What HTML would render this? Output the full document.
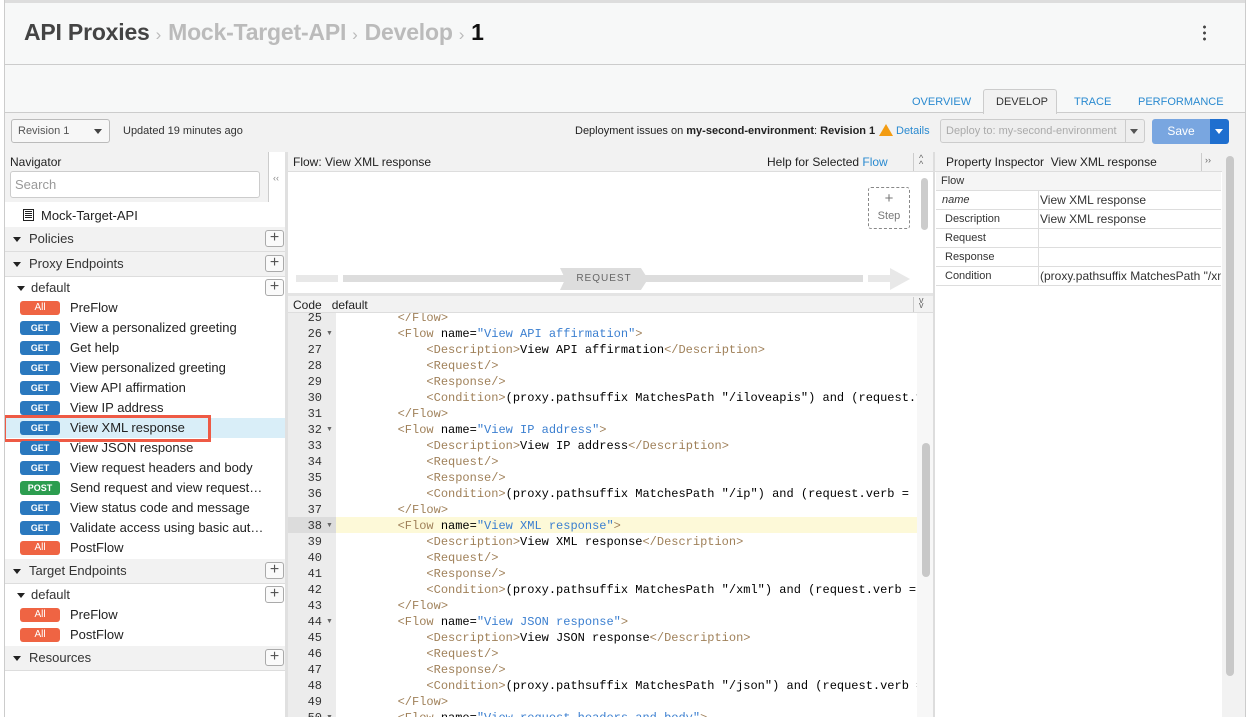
<!DOCTYPE html>
<html><head><meta charset="utf-8"><style>
*{box-sizing:border-box;margin:0;padding:0}
body{width:1251px;height:717px;overflow:hidden;background:#f2f2f2;font-family:"Liberation Sans",sans-serif;font-size:12px;color:#333;position:relative}
.a{position:absolute}
.hdr{left:5px;top:0;width:1240px;height:65px;background:#f7f8f8;border-top:3px solid #ddd;border-bottom:1px solid #ccc}
.tabs{left:5px;top:65px;width:1240px;height:48px;background:#f7f8f8;border-bottom:1px solid #ccc}
.tab{position:absolute;top:96px;font-size:11px;color:#2a8ad0}
.nav{left:5px;top:152px;width:280px;height:565px;background:#fff}
.sec{position:absolute;left:5px;width:280px;height:25px;background:#f2f2f2;border-bottom:1px solid #ddd;font-size:13px;line-height:24px;padding-left:24px}
.tri{position:absolute;left:8px;top:10px;width:0;height:0;border-left:4px solid transparent;border-right:4px solid transparent;border-top:5px solid #222}
.plus{position:absolute;left:265px;width:19px;height:17px;border:1px solid #aaa;border-radius:3px;background:#fafafa;color:#555;font-size:16px;line-height:14px;text-align:center}
.row{position:absolute;left:5px;width:280px;height:20px;font-size:13px;line-height:20px}
.b{position:absolute;left:15px;top:3px;width:40px;height:14px;border-radius:3px;color:#fff;font-size:9px;font-weight:bold;line-height:14px;text-align:center}
.get{background:#2a78be}.all{background:#ef6443;font-weight:normal;font-size:10px}.post{background:#2c9d4f}
.row .t{position:absolute;left:65px;top:0;color:#222;white-space:nowrap}
.code{font-family:"Liberation Mono",monospace;font-size:12px;white-space:pre}
.ln{position:absolute;left:288px;width:48px;height:16px;line-height:16px;text-align:right;padding-right:14px;font-family:"Liberation Mono",monospace;font-size:12px;color:#333}
.ar{position:absolute;left:326px;height:16px;line-height:16px;font-size:7px;color:#666}
.cl{position:absolute;left:340px;height:16px;line-height:16px;color:#000}
.g{color:#a0815a}.s{color:#3b7fd0}
.pr{position:absolute;left:936px;width:285px;height:19px;border-bottom:1px solid #ddd;font-size:12px;line-height:19px;background:#fff}
.pr .k{position:absolute;left:9px}.pr .v{position:absolute;left:102px;border-left:1px solid #ddd;padding-left:1px;height:19px;width:183px;white-space:nowrap;overflow:hidden}
.sep{color:#bbb;font-size:17px;font-weight:normal;margin:0 7px 0 6px}
</style></head><body>
<div class="a hdr"></div>
<div class="a" style="left:24px;top:19px;font-size:23px;color:#444;font-weight:bold;letter-spacing:-0.2px;white-space:nowrap">API Proxies<span class="sep">›</span><span style="color:#bbb">Mock-Target-API</span><span class="sep">›</span><span style="color:#bbb">Develop</span><span class="sep">›</span><span style="color:#111">1</span></div>
<div class="a" style="left:1203px;top:24px;width:3px;height:18px;background:radial-gradient(circle,#444 1.3px,transparent 1.6px) 0 0/3px 6px"></div>
<div class="a tabs"></div>
<div class="a" style="left:983px;top:89px;width:74px;height:25px;background:#f2f2f2;border:1px solid #ccc;border-bottom:none;border-radius:3px 3px 0 0"></div>
<div class="tab" style="left:912px">OVERVIEW</div>
<div class="tab" style="left:996px;color:#333">DEVELOP</div>
<div class="tab" style="left:1074px">TRACE</div>
<div class="tab" style="left:1138px">PERFORMANCE</div>
<div class="a" style="left:11px;top:119px;width:99px;height:24px;border:1px solid #bbb;border-radius:3px;background:#f7f7f7;font-size:11px;line-height:22px;padding-left:6px;color:#555">Revision 1<span style="position:absolute;right:7px;top:9px;border-left:4px solid transparent;border-right:4px solid transparent;border-top:5px solid #444"></span></div>
<div class="a" style="left:123px;top:125px;font-size:11px;color:#333">Updated 19 minutes ago</div>
<div class="a" style="left:575px;top:125px;font-size:11px;color:#222">Deployment issues on <b>my-second-environment</b>: <b>Revision 1</b></div>
<div class="a" style="left:879px;top:124px;width:0;height:0;border-left:7px solid transparent;border-right:7px solid transparent;border-bottom:12px solid #f39c12"></div>
<div class="a" style="left:896px;top:125px;font-size:11px;color:#2a8ad0">Details</div>
<div class="a" style="left:940px;top:119px;width:205px;height:24px;border:1px solid #ccc;border-radius:3px;background:#eee;font-size:11px;line-height:22px;padding-left:5px;color:#aaa">Deploy to: my-second-environment<span style="position:absolute;left:184px;top:0;width:1px;height:22px;background:#ccc"></span><span style="position:absolute;right:6px;top:9px;border-left:4px solid transparent;border-right:4px solid transparent;border-top:5px solid #555"></span></div>
<div class="a" style="left:1152px;top:119px;width:58px;height:25px;border-radius:3px 0 0 3px;background:#79a6e0;color:#fff;font-size:12px;line-height:25px;text-align:center">Save</div>
<div class="a" style="left:1210px;top:119px;width:19px;height:25px;border-radius:0 3px 3px 0;background:#1f6fcf"><span style="position:absolute;left:5px;top:10px;border-left:4px solid transparent;border-right:4px solid transparent;border-top:5px solid #fff"></span></div>

<!-- nav -->
<div class="a nav"></div>
<div class="a" style="left:5px;top:152px;width:263px;height:50px;background:#f2f2f2"></div>
<div class="a" style="left:268px;top:152px;width:1px;height:50px;background:#ccc"></div>
<div class="a" style="left:10px;top:155px;font-size:12px;color:#222">Navigator</div>
<div class="a" style="left:10px;top:171px;width:250px;height:27px;border:1px solid #ccc;border-radius:3px;background:#fff;font-size:13px;color:#999;line-height:25px;padding-left:4px">Search</div>
<div class="a" style="left:273px;top:173px;font-size:9px;color:#888">‹‹</div>
<div class="a" style="left:23px;top:209px;width:11px;height:12px;border:1px solid #222"><div style="margin:1px;height:8px;background:repeating-linear-gradient(#222 0 1px,#fff 1px 2px)"></div></div>
<div class="a" style="left:41px;top:208px;font-size:13px;color:#222">Mock-Target-API</div>
<div class="sec" style="top:227px"><span class="tri"></span>Policies</div><div class="plus" style="top:230px">+</div>
<div class="sec" style="top:252px"><span class="tri"></span>Proxy Endpoints</div><div class="plus" style="top:255px">+</div>
<div class="row" style="top:278px;padding-left:26px;font-size:13px"><span class="tri" style="left:12px;top:8px"></span>default</div><div class="plus" style="top:279px">+</div>
<div class="row" style="top:298px"><span class="b all">All</span><span class="t">PreFlow</span></div>
<div class="row" style="top:318px"><span class="b get">GET</span><span class="t">View a personalized greeting</span></div>
<div class="row" style="top:338px"><span class="b get">GET</span><span class="t">Get help</span></div>
<div class="row" style="top:358px"><span class="b get">GET</span><span class="t">View personalized greeting</span></div>
<div class="row" style="top:378px"><span class="b get">GET</span><span class="t">View API affirmation</span></div>
<div class="row" style="top:398px"><span class="b get">GET</span><span class="t">View IP address</span></div>
<div class="row" style="top:418px;background:#d9eef8"><span class="b get">GET</span><span class="t">View XML response</span></div>
<div class="a" style="left:3px;top:415px;width:208px;height:27px;border:3px solid #ee5a45"></div>
<div class="row" style="top:438px"><span class="b get">GET</span><span class="t">View JSON response</span></div>
<div class="row" style="top:458px"><span class="b get">GET</span><span class="t">View request headers and body</span></div>
<div class="row" style="top:478px"><span class="b post">POST</span><span class="t">Send request and view request…</span></div>
<div class="row" style="top:498px"><span class="b get">GET</span><span class="t">View status code and message</span></div>
<div class="row" style="top:518px"><span class="b get">GET</span><span class="t">Validate access using basic aut…</span></div>
<div class="row" style="top:538px"><span class="b all">All</span><span class="t">PostFlow</span></div>
<div class="sec" style="top:559px"><span class="tri"></span>Target Endpoints</div><div class="plus" style="top:562px">+</div>
<div class="row" style="top:585px;padding-left:26px"><span class="tri" style="left:12px;top:8px"></span>default</div><div class="plus" style="top:586px">+</div>
<div class="row" style="top:605px"><span class="b all">All</span><span class="t">PreFlow</span></div>
<div class="row" style="top:625px"><span class="b all">All</span><span class="t">PostFlow</span></div>
<div class="sec" style="top:646px"><span class="tri"></span>Resources</div><div class="plus" style="top:649px">+</div>
<div class="a" style="left:285px;top:152px;width:3px;height:565px;background:#e0e0e0"></div>

<!-- flow panel -->
<div class="a" style="left:288px;top:152px;width:645px;height:20px;background:#f2f2f2;border-bottom:1px solid #ddd"></div>
<div class="a" style="left:293px;top:155px;font-size:12px;color:#222">Flow: View XML response</div>
<div class="a" style="left:767px;top:155px;font-size:12px;color:#222">Help for Selected <span style="color:#2a8ad0">Flow</span></div>
<div class="a" style="left:913px;top:153px;width:1px;height:18px;background:#ccc"></div>
<div class="a" style="left:919px;top:155px;font-size:9px;color:#666;line-height:6px">^<br>^</div>
<div class="a" style="left:288px;top:172px;width:645px;height:122px;background:#fff"></div>
<div class="a" style="left:921px;top:178px;width:7px;height:52px;border-radius:4px;background:#ccc"></div>
<div class="a" style="left:868px;top:187px;width:42px;height:42px;border:1px dashed #888;border-radius:3px;text-align:center;font-size:11px;color:#777;line-height:16px;padding-top:3px"><span style="font-size:15px">+</span><br>Step</div>
<div class="a" style="left:296px;top:275px;width:42px;height:7px;background:#e8e8e8"></div>
<div class="a" style="left:343px;top:275px;width:520px;height:7px;background:#ddd"></div>
<div class="a" style="left:560px;top:268px;width:88px;height:22px;background:#ddd;clip-path:polygon(0 0,92% 0,100% 50%,92% 100%,0 100%,6% 50%);font-size:10px;color:#666;line-height:22px;text-align:center;letter-spacing:1px">REQUEST</div>
<div class="a" style="left:868px;top:275px;width:22px;height:7px;background:#e8e8e8"></div>
<div class="a" style="left:890px;top:268px;width:0;height:0;border-top:11px solid transparent;border-bottom:11px solid transparent;border-left:20px solid #e8e8e8"></div>
<div class="a" style="left:288px;top:293px;width:645px;height:3px;background:#e4e4e4"></div>
<div class="a" style="left:288px;top:296px;width:645px;height:17px;background:#f2f2f2;border-bottom:1px solid #ddd"></div>
<div class="a" style="left:293px;top:298px;font-size:12px;color:#222">Code&nbsp;&nbsp;&nbsp;default</div>
<div class="a" style="left:913px;top:297px;width:1px;height:15px;background:#ccc"></div>
<div class="a" style="left:919px;top:298px;font-size:9px;color:#666;line-height:5px">v<br>v</div>
<div class="a" style="left:288px;top:313px;width:48px;height:404px;background:#ececec"></div>
<div class="a" style="left:336px;top:313px;width:581px;height:404px;background:#fff"></div>
<div class="a" style="left:917px;top:313px;width:16px;height:404px;background:#f7f7f7"></div>
<div class="a" style="left:922px;top:443px;width:8px;height:134px;border-radius:4px;background:#c8c8c8"></div>
<div class="a" style="left:288px;top:517px;width:48px;height:16px;background:#dcdcdc"></div>
<div class="a" style="left:336px;top:517px;width:581px;height:16px;background:#fdf9d8"></div>
<div class="a" style="left:288px;top:313px;width:629px;height:404px;overflow:hidden">
<div style="position:relative;left:-288px;top:-313px">
<div class="ln" style="top:310px">25</div><div class="cl code" style="top:310px"><span class="g">        &lt;/Flow&gt;</span></div>
<div class="ln" style="top:326px">26</div><div class="ar" style="top:326px">▼</div><div class="cl code" style="top:326px">        <span class="g">&lt;Flow </span>name=<span class="s">"View API affirmation"</span><span class="g">&gt;</span></div>
<div class="ln" style="top:342px">27</div><div class="cl code" style="top:342px">            <span class="g">&lt;Description&gt;</span>View API affirmation<span class="g">&lt;/Description&gt;</span></div>
<div class="ln" style="top:358px">28</div><div class="cl code g" style="top:358px">            &lt;Request/&gt;</div>
<div class="ln" style="top:374px">29</div><div class="cl code g" style="top:374px">            &lt;Response/&gt;</div>
<div class="ln" style="top:390px">30</div><div class="cl code" style="top:390px">            <span class="g">&lt;Condition&gt;</span>(proxy.pathsuffix MatchesPath "/iloveapis") and (request.verb = "GET")</div>
<div class="ln" style="top:406px">31</div><div class="cl code g" style="top:406px">        &lt;/Flow&gt;</div>
<div class="ln" style="top:422px">32</div><div class="ar" style="top:422px">▼</div><div class="cl code" style="top:422px">        <span class="g">&lt;Flow </span>name=<span class="s">"View IP address"</span><span class="g">&gt;</span></div>
<div class="ln" style="top:438px">33</div><div class="cl code" style="top:438px">            <span class="g">&lt;Description&gt;</span>View IP address<span class="g">&lt;/Description&gt;</span></div>
<div class="ln" style="top:454px">34</div><div class="cl code g" style="top:454px">            &lt;Request/&gt;</div>
<div class="ln" style="top:470px">35</div><div class="cl code g" style="top:470px">            &lt;Response/&gt;</div>
<div class="ln" style="top:486px">36</div><div class="cl code" style="top:486px">            <span class="g">&lt;Condition&gt;</span>(proxy.pathsuffix MatchesPath "/ip") and (request.verb = "GET")</div>
<div class="ln" style="top:502px">37</div><div class="cl code g" style="top:502px">        &lt;/Flow&gt;</div>
<div class="ln" style="top:518px">38</div><div class="ar" style="top:518px">▼</div><div class="cl code" style="top:518px">        <span class="g">&lt;Flow </span>name=<span class="s">"View XML response"</span><span class="g">&gt;</span></div>
<div class="ln" style="top:534px">39</div><div class="cl code" style="top:534px">            <span class="g">&lt;Description&gt;</span>View XML response<span class="g">&lt;/Description&gt;</span></div>
<div class="ln" style="top:550px">40</div><div class="cl code g" style="top:550px">            &lt;Request/&gt;</div>
<div class="ln" style="top:566px">41</div><div class="cl code g" style="top:566px">            &lt;Response/&gt;</div>
<div class="ln" style="top:582px">42</div><div class="cl code" style="top:582px">            <span class="g">&lt;Condition&gt;</span>(proxy.pathsuffix MatchesPath "/xml") and (request.verb = "GET")</div>
<div class="ln" style="top:598px">43</div><div class="cl code g" style="top:598px">        &lt;/Flow&gt;</div>
<div class="ln" style="top:614px">44</div><div class="ar" style="top:614px">▼</div><div class="cl code" style="top:614px">        <span class="g">&lt;Flow </span>name=<span class="s">"View JSON response"</span><span class="g">&gt;</span></div>
<div class="ln" style="top:630px">45</div><div class="cl code" style="top:630px">            <span class="g">&lt;Description&gt;</span>View JSON response<span class="g">&lt;/Description&gt;</span></div>
<div class="ln" style="top:646px">46</div><div class="cl code g" style="top:646px">            &lt;Request/&gt;</div>
<div class="ln" style="top:662px">47</div><div class="cl code g" style="top:662px">            &lt;Response/&gt;</div>
<div class="ln" style="top:678px">48</div><div class="cl code" style="top:678px">            <span class="g">&lt;Condition&gt;</span>(proxy.pathsuffix MatchesPath "/json") and (request.verb = "GET")</div>
<div class="ln" style="top:694px">49</div><div class="cl code g" style="top:694px">        &lt;/Flow&gt;</div>
<div class="ln" style="top:710px">50</div><div class="ar" style="top:710px">▼</div><div class="cl code" style="top:710px">        <span class="g">&lt;Flow </span>name=<span class="s">"View request headers and body"</span><span class="g">&gt;</span></div>
</div></div>
<div class="a" style="left:933px;top:152px;width:2px;height:565px;background:#ddd"></div>

<!-- property inspector -->
<div class="a" style="left:935px;top:152px;width:287px;height:565px;background:#fff"></div>
<div class="a" style="left:935px;top:152px;width:287px;height:20px;background:#f2f2f2;border-bottom:1px solid #ddd"></div>
<div class="a" style="left:946px;top:155px;font-size:12px;color:#222">Property Inspector&nbsp;&nbsp;View XML response</div>
<div class="a" style="left:1201px;top:153px;width:1px;height:18px;background:#ccc"></div>
<div class="a" style="left:1205px;top:155px;font-size:9px;color:#666">››</div>
<div class="pr" style="top:172px;background:#f5f5f5;font-size:11px"><span class="k" style="left:5px">Flow</span></div>
<div class="pr" style="top:191px;font-size:11px"><span class="k" style="left:6px;font-style:italic">name</span><span class="v" style="font-size:12px">View XML response</span></div>
<div class="pr" style="top:210px"><span class="k" style="font-size:11px">Description</span><span class="v">View XML response</span></div>
<div class="pr" style="top:229px;font-size:11px"><span class="k">Request</span><span class="v"></span></div>
<div class="pr" style="top:248px;font-size:11px"><span class="k">Response</span><span class="v"></span></div>
<div class="pr" style="top:267px"><span class="k" style="font-size:11px">Condition</span><span class="v">(proxy.pathsuffix MatchesPath "/xml")</span></div>
<div class="a" style="left:1222px;top:152px;width:23px;height:565px;background:#f2f2f2"></div>
<div class="a" style="left:1226px;top:156px;width:8px;height:520px;border-radius:4px;background:#c8c8c8"></div>
<div class="a" style="left:1245px;top:0;width:6px;height:717px;background:#fff;border-left:1px solid #ccc"></div>
<div class="a" style="left:0;top:0;width:5px;height:717px;background:#fff;border-right:1px solid #ccc"></div>
</body></html>
